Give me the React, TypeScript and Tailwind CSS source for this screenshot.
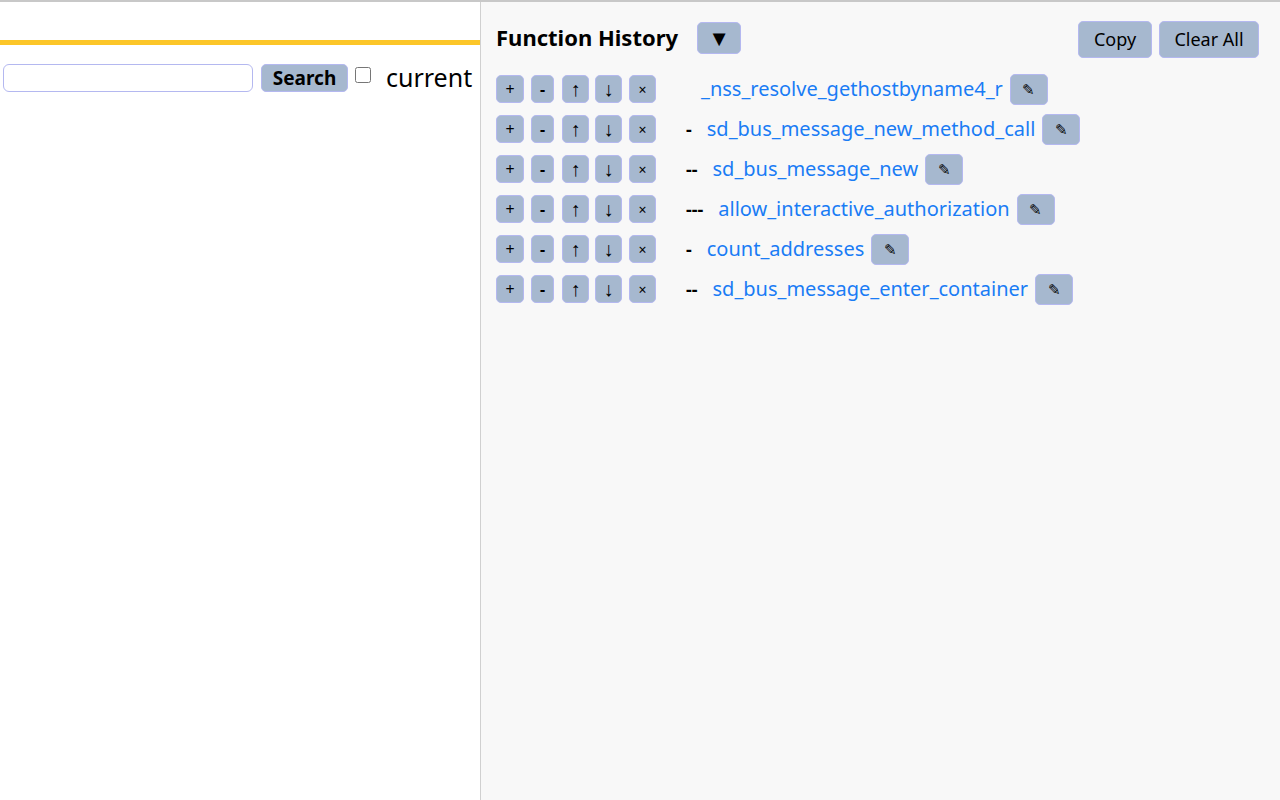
const rows = [
  { dash: '', name: '_nss_resolve_gethostbyname4_r' },
  { dash: '-', name: 'sd_bus_message_new_method_call' },
  { dash: '--', name: 'sd_bus_message_new' },
  { dash: '---', name: 'allow_interactive_authorization' },
  { dash: '-', name: 'count_addresses' },
  { dash: '--', name: 'sd_bus_message_enter_container' },
]

const btn =
  'flex items-center justify-center rounded-[5px] border border-[#b4b8f0] bg-[#a6b8cf] text-black'

export default function App() {
  return (
    <div className="flex h-[800px] w-[1280px] overflow-hidden border-t-2 border-[#c8c8c8] font-['Liberation_Sans',Arial,sans-serif]">
      <div className="w-[480px] shrink-0 overflow-hidden bg-white">
        <div className="mt-[38px] h-[5px] bg-[#fcc629]" />
        <div className="mt-[14px] flex items-center whitespace-nowrap">
          <input className="ml-[3px] h-[28px] w-[250px] rounded-[6px] border border-[#b4b8f0] bg-white" />
          <button className={`${btn} ml-[8px] h-[28px] w-[87px] text-[19px] font-bold`}>Search</button>
          <input type="checkbox" className="ml-[7px] h-[16px] w-[16px] -translate-y-[3px]" />
          <span className="ml-[15px] text-[25px] text-black">current</span>
        </div>
      </div>
      <div className="flex-1 border-l border-[#d0d0d0] bg-[#f8f8f8] pl-[15px] pr-[21px]">
        <div className="mt-[15px] flex items-center">
          <span className="text-[22px] font-bold text-black">Function History</span>
          <button className={`${btn} ml-[19px] h-[32px] w-[44px] text-[22px]`}>▼</button>
          <div className="flex-1" />
          <button className={`${btn} mt-[4px] h-[37px] w-[74px] text-[18px]`}>Copy</button>
          <button className={`${btn} ml-[7px] mt-[4px] h-[37px] w-[100px] text-[18px]`}>Clear All</button>
        </div>
        <div className="mt-[16px] flex flex-col gap-[10px]">
          {rows.map((r, i) => (
            <div key={i} className="flex h-[30px] items-center whitespace-nowrap">
              <button className={`${btn} h-[28px] w-[28px] text-[16px]`}>+</button>
              <button className={`${btn} ml-[7px] h-[28px] w-[23px] text-[16px] font-bold`}>-</button>
              <button className={`${btn} ml-[8px] h-[28px] w-[27px] text-[20px] text-[#3a1050]`}>↑</button>
              <button className={`${btn} ml-[6px] h-[28px] w-[27px] text-[20px] text-[#1050a0]`}>↓</button>
              <button className={`${btn} ml-[7px] h-[28px] w-[27px] text-[14px]`}>×</button>
              <span className="ml-[30px] text-[18px] font-bold text-black">{r.dash}</span>
              <span className="ml-[15px] text-[20px] text-[#1a7cf5]">{r.name}</span>
              <button className={`${btn} ml-[7px] h-[31px] w-[38px] text-[15px]`}>✎</button>
            </div>
          ))}
        </div>
      </div>
    </div>
  )
}
